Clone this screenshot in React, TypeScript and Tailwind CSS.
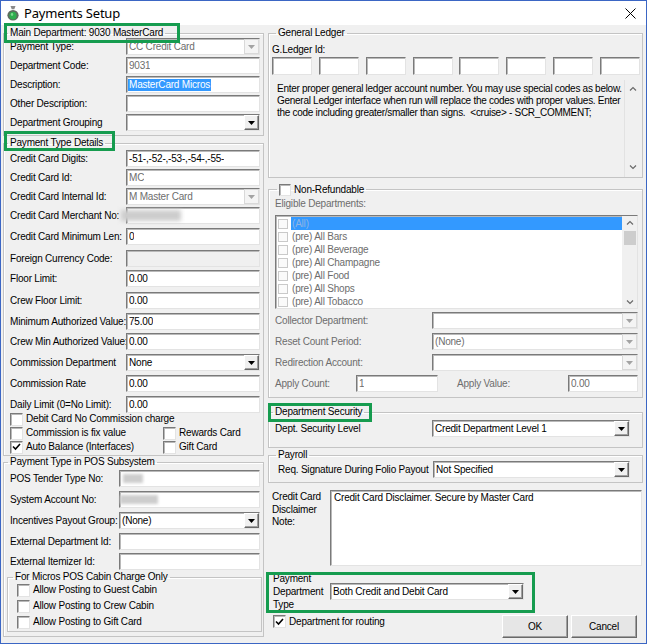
import type { ReactNode } from 'react';

const sunken =
  'border border-t-[#7a7a7a] border-l-[#7a7a7a] border-r-[#e3e3e3] border-b-[#e3e3e3] shadow-[inset_1px_1px_0_#b9b9b9]';
const raised =
  'border border-t-white border-l-white border-r-[#696969] border-b-[#696969] shadow-[inset_-1px_-1px_0_#a0a0a0]';

interface TextBoxProps {
  value?: string;
  gray?: boolean;
  disabled?: boolean;
  h?: string;
  className?: string;
  children?: ReactNode;
}

function TextBox({ value = '', gray = false, disabled = false, h = 'h-[17px]', className = '', children }: TextBoxProps) {
  return (
    <div
      className={`relative ${h} ${sunken} ${disabled ? 'bg-[#f0f0f0]' : 'bg-white'} flex items-center pl-[2px] ${
        gray ? 'text-[#6d6d6d]' : 'text-black'
      } ${className}`}
    >
      <span className="whitespace-nowrap overflow-hidden">{value}</span>
      {children}
    </div>
  );
}

function Combo({ value = '', disabled = false, className = '' }: { value?: string; disabled?: boolean; className?: string }) {
  return (
    <div className={`h-[17px] ${sunken} bg-white flex items-center ${className}`}>
      <span className={`flex-1 pl-[2px] whitespace-nowrap overflow-hidden ${disabled ? 'text-[#6d6d6d]' : ''}`}>{value}</span>
      <div
        className={`w-[15px] h-full flex items-center justify-center ${
          disabled ? 'border border-[#d9d9d9] bg-[#f4f4f4]' : `${raised} bg-[#f0f0f0]`
        }`}
      >
        <svg width="7" height="4" viewBox="0 0 7 4">
          <path d="M0 0h7L3.5 4z" fill={disabled ? '#a3a3a3' : '#000'} />
        </svg>
      </div>
    </div>
  );
}

function Check({ checked = false, faint = false, small = false }: { checked?: boolean; faint?: boolean; small?: boolean }) {
  if (faint) {
    return <div className="w-[10px] h-[10px] shrink-0 border border-[#c9c9c9] bg-[#fafafa]" />;
  }
  return (
    <div className={`${small ? 'w-[12px] h-[12px]' : 'w-[13px] h-[13px]'} shrink-0 ${sunken} bg-white flex items-center justify-center`}>
      {checked && (
        <svg width="9" height="8" viewBox="0 0 9 8">
          <path d="M1 3.5l2.5 2.5L8 1" stroke="#000" strokeWidth="1.6" fill="none" />
        </svg>
      )}
    </div>
  );
}

function CheckLabel({ label, checked = false }: { label: string; checked?: boolean }) {
  return (
    <div className="flex items-center gap-[3px] whitespace-nowrap">
      <Check checked={checked} />
      <span>{label}</span>
    </div>
  );
}

function Group({ title, className = '', legendClass = 'ml-[4px]', children }: { title: ReactNode; className?: string; legendClass?: string; children: ReactNode }) {
  return (
    <fieldset className={`border border-[#c4c4c4] shadow-[inset_1px_1px_0_white] ${className}`}>
      <legend className={`px-[2px] leading-[12px] ${legendClass}`}>{title}</legend>
      {children}
    </fieldset>
  );
}

function Row({ label, h, labelW, children }: { label: string; h: string; labelW: string; children: ReactNode }) {
  return (
    <div className={`flex items-start ${h}`}>
      <div className={`${labelW} h-[17px] flex items-center whitespace-nowrap shrink-0`}>{label}</div>
      <div className="flex-1 min-w-0">{children}</div>
    </div>
  );
}

function Chevron({ up }: { up?: boolean }) {
  return (
    <svg width="8" height="5" viewBox="0 0 8 5">
      <path d={up ? 'M1 4.5L4 1.5l3 3' : 'M1 0.5L4 3.5l3-3'} stroke="#6a6a6a" strokeWidth="1.2" fill="none" />
    </svg>
  );
}

const detailRows: { label: string; h: string; field: ReactNode }[] = [
  { label: 'Credit Card Digits:', h: 'h-[19px]', field: <TextBox value="-51-,-52-,-53-,-54-,-55-" /> },
  { label: 'Credit Card Id:', h: 'h-[19px]', field: <TextBox value="MC" gray /> },
  { label: 'Credit Card Internal Id:', h: 'h-[19px]', field: <Combo value="M Master Card" disabled /> },
  {
    label: 'Credit Card Merchant No:',
    h: 'h-[21px]',
    field: (
      <TextBox>
        <div className="absolute left-[-6px] top-[2px] w-[60px] h-[11px] bg-[#cdcdcd] blur-[2px]" />
      </TextBox>
    ),
  },
  { label: 'Credit Card Minimum Len:', h: 'h-[22px]', field: <TextBox value="0" /> },
  { label: 'Foreign Currency Code:', h: 'h-[20px]', field: <TextBox disabled /> },
  { label: 'Floor Limit:', h: 'h-[22px]', field: <TextBox value="0.00" /> },
  { label: 'Crew Floor Limit:', h: 'h-[21px]', field: <TextBox value="0.00" /> },
  { label: 'Minimum Authorized Value:', h: 'h-[20px]', field: <TextBox value="75.00" /> },
  { label: 'Crew Min Authorized Value:', h: 'h-[21px]', field: <TextBox value="0.00" /> },
  { label: 'Commission Department', h: 'h-[21px]', field: <Combo value="None" /> },
  { label: 'Commission Rate', h: 'h-[21px]', field: <TextBox value="0.00" /> },
  { label: 'Daily Limit (0=No Limit):', h: 'h-[16px]', field: <TextBox value="0.00" /> },
];

const departments = ['(All)', '(pre) All Bars', '(pre) All Beverage', '(pre) All Champagne', '(pre) All Food', '(pre) All Shops', '(pre) All Tobacco'];

export default function App() {
  return (
    <div className="relative w-[647px] h-[644px] overflow-hidden border border-[#3b66c4] bg-[#f0f0f0] text-black font-['Liberation_Sans',Arial,sans-serif] text-[10px] leading-[12px] tracking-[-0.2px]">
      {/* Title bar */}
      <div className="h-[24px] bg-white flex items-center pl-[5px] pr-[10px]">
        <svg width="14" height="16" viewBox="0 0 14 16">
          <path d="M4.5 1h5l-1.2 3.2h-2.6z" fill="#8a8a8a" />
          <ellipse cx="7" cy="10.3" rx="5.6" ry="5.2" fill="#5f6b5f" />
          <ellipse cx="7" cy="10.6" rx="3.6" ry="3.9" fill="#2fae4e" />
          <ellipse cx="6" cy="9.5" rx="1.2" ry="1.4" fill="#7fd98f" />
        </svg>
        <span className="ml-[4px] font-['Noto_Sans',sans-serif] text-[13px] tracking-[-0.2px] leading-[20px]">Payments Setup</span>
        <div className="flex-1" />
        <svg width="11" height="11" viewBox="0 0 11 11">
          <path d="M0.5 0.5l10 10M10.5 0.5l-10 10" stroke="#000" strokeWidth="1" />
        </svg>
      </div>

      <div className="flex pl-[2px] gap-[4px]">
        {/* Left column */}
        <div className="w-[261px] flex flex-col">
          <Group title="Main Department: 9030 MasterCard" className="mt-[2px]">
            <div className="-mt-px pl-[6px] pr-[3px] pb-[2px]">
              <Row label="Payment Type:" h="h-[19px]" labelW="w-[116px]">
                <Combo value="CC Credit Card" disabled />
              </Row>
              <Row label="Department Code:" h="h-[19px]" labelW="w-[116px]">
                <TextBox value="9031" gray />
              </Row>
              <Row label="Description:" h="h-[19px]" labelW="w-[116px]">
                <div className={`h-[17px] ${sunken} bg-white flex items-center pl-[1px]`}>
                  <span className="bg-[#3399ff] text-white px-[1px] whitespace-nowrap">MasterCard Micros</span>
                </div>
              </Row>
              <Row label="Other Description:" h="h-[19px]" labelW="w-[116px]">
                <TextBox />
              </Row>
              <Row label="Department Grouping" h="h-[19px]" labelW="w-[116px]">
                <Combo />
              </Row>
            </div>
          </Group>

          <Group title="Payment Type Details" className="mt-[1px]">
            <div className="mt-[1px] pl-[6px] pr-[3px] pb-[1px]">
              {detailRows.map((r) => (
                <Row key={r.label} label={r.label} h={r.h} labelW="w-[116px]">
                  {r.field}
                </Row>
              ))}
              <div className="h-[14px] flex items-center">
                <CheckLabel label="Debit Card No Commission charge" />
              </div>
              <div className="h-[14px] flex items-center">
                <div className="w-[153px]">
                  <CheckLabel label="Commission is fix value" />
                </div>
                <CheckLabel label="Rewards Card" />
              </div>
              <div className="h-[14px] flex items-center">
                <div className="w-[153px]">
                  <CheckLabel label="Auto Balance (Interfaces)" checked />
                </div>
                <CheckLabel label="Gift Card" />
              </div>
            </div>
          </Group>

          <Group title="Payment Type in POS Subsystem">
            <div className="mt-[2px] pl-[6px] pr-[3px]">
              <Row label="POS Tender Type No:" h="h-[21px]" labelW="w-[109px]">
                <TextBox>
                  <div className="absolute left-[3px] top-[3px] w-[20px] h-[9px] bg-[#cdcdcd] blur-[1.5px]" />
                </TextBox>
              </Row>
              <Row label="System Account No:" h="h-[21px]" labelW="w-[109px]">
                <TextBox>
                  <div className="absolute left-0 top-[3px] w-[38px] h-[9px] bg-[#cdcdcd] blur-[1.5px]" />
                </TextBox>
              </Row>
              <Row label="Incentives Payout Group:" h="h-[21px]" labelW="w-[109px]">
                <Combo value="(None)" />
              </Row>
              <Row label="External Department Id:" h="h-[20px]" labelW="w-[109px]">
                <TextBox />
              </Row>
              <Row label="External Itemizer Id:" h="h-[18px]" labelW="w-[109px]">
                <TextBox />
              </Row>
            </div>
            <div className="ml-[3px] mr-[1px] mb-[4px]">
              <Group title="For Micros POS Cabin Charge Only" legendClass="ml-[5px]">
                <div className="-mt-px pl-[9px] pb-[1px]">
                  <div className="h-[16px] flex items-center">
                    <CheckLabel label="Allow Posting to Guest Cabin" />
                  </div>
                  <div className="h-[16px] flex items-center">
                    <CheckLabel label="Allow Posting to Crew Cabin" />
                  </div>
                  <div className="h-[16px] flex items-center">
                    <CheckLabel label="Allow Posting to Gift Card" />
                  </div>
                </div>
              </Group>
            </div>
          </Group>
        </div>

        {/* Right column */}
        <div className="w-[375px] flex flex-col">
          <Group title="General Ledger" className="mt-[2px]" legendClass="ml-[7px]">
            <div className="pl-[3px] pt-[5px] pb-[1px]">G.Ledger Id:</div>
            <div className="flex justify-between pl-[3px] pr-[2px]">
              {[0, 1, 2, 3, 4, 5, 6, 7].map((i) => (
                <TextBox key={i} h="h-[18px]" className="w-[40px]" />
              ))}
            </div>
            <div className="mt-[5px] h-[97px] flex">
              <div className="flex-1 pl-[8px] pt-[3px] whitespace-nowrap tracking-[-0.28px]">
                Enter proper general ledger account number. You may use special codes as below.
                <br />
                General Ledger interface when run will replace the codes with proper values. Enter
                <br />
                the code including greater/smaller than signs.&nbsp; &lt;cruise&gt; - SCR_COMMENT;
              </div>
              <div className="w-[16px] mr-[2px] border-l border-[#e2e2e2] flex flex-col items-center justify-between pt-[6px] pb-[7px]">
                <Chevron up />
                <Chevron />
              </div>
            </div>
          </Group>

          <Group
            className="mt-[5px]"
            legendClass="ml-[8px]"
            title={
              <span className="flex items-center gap-[3px] h-[13px]">
                <Check small />
                <span>Non-Refundable</span>
              </span>
            }
          >
            <div className="mt-[2px] pl-[6px] text-[#6d6d6d]">Eligible Departments:</div>
            <div className={`mt-[5px] ml-[6px] mr-[4px] h-[94px] ${sunken} bg-white flex`}>
              <div className="flex-1 pt-[1px] text-[#6d6d6d]">
                {departments.map((d, i) => (
                  <div key={d} className="h-[13px] flex items-center pl-[2px] gap-[3px]">
                    <Check faint />
                    <span className={`flex-1 h-full flex items-center pl-[1px] ${i === 0 ? 'bg-[#3399ff] text-[#8fb3e3]' : ''}`}>{d}</span>
                  </div>
                ))}
              </div>
              <div className="w-[15px] bg-[#f0f0f0] flex flex-col items-center pt-[4px] pb-[3px]">
                <Chevron up />
                <div className="mt-[6px] w-[12px] h-[14px] bg-[#cdcdcd]" />
                <div className="flex-1" />
                <Chevron />
              </div>
            </div>
            <div className="mt-[1px] pl-[6px] pr-[4px] pb-[3px] text-[#6d6d6d]">
              <div className="h-[21px] flex items-center">
                <div className="w-[157px]">Collector Department:</div>
                <Combo disabled className="flex-1" />
              </div>
              <div className="h-[21px] flex items-center">
                <div className="w-[157px]">Reset Count Period:</div>
                <Combo value="(None)" disabled className="flex-1" />
              </div>
              <div className="h-[21px] flex items-center">
                <div className="w-[157px]">Redirection Account:</div>
                <Combo disabled className="flex-1" />
              </div>
              <div className="h-[21px] flex items-center">
                <div className="w-[81px]">Apply Count:</div>
                <TextBox value="1" gray className="w-[82px]" />
                <div className="ml-[19px] w-[111px]">Apply Value:</div>
                <TextBox value="0.00" gray className="flex-1" />
              </div>
            </div>
          </Group>

          <Group title="Department Security" className="mt-[8px]">
            <div className="mt-[1px] pl-[6px] pb-[8px] h-[28px] flex items-start">
              <div className="w-[157px] h-[19px] flex items-center">Dept. Security Level</div>
              <Combo value="Credit Department Level 1" className="w-[198px] mt-[1px]" />
            </div>
          </Group>

          <Group title="Payroll" className="mt-[1px]" legendClass="ml-[7px]">
            <div className="pl-[9px] pb-[4px] flex items-center">
              <div className="w-[155px] whitespace-nowrap">Req. Signature During Folio Payout</div>
              <Combo value="Not Specified" className="w-[197px]" />
            </div>
          </Group>

          <div className="mt-[7px] flex">
            <div className="w-[62px] shrink-0 pl-[4px] leading-[12.5px] pt-[1px] whitespace-nowrap">
              Credit Card
              <br />
              Disclaimer
              <br />
              Note:
            </div>
            <div className={`flex-1 mr-[1px] h-[76px] ${sunken} bg-white pl-[3px] pt-[1px]`}>Credit Card Disclaimer. Secure by Master Card</div>
          </div>

          <div className="mt-[6px] flex items-center">
            <div className="w-[62px] shrink-0 pl-[5px] leading-[13px] whitespace-nowrap">
              Payment
              <br />
              Department
              <br />
              Type
            </div>
            <Combo value="Both Credit and Debit Card" className="w-[194px]" />
          </div>

          <div className="mt-[4px] h-[23px] flex items-start">
            <div className="flex-1 pl-[5px]">
              <CheckLabel label="Department for routing" checked />
            </div>
            <div className="flex gap-[3px] mr-[6px]">
              <button className={`w-[66px] h-[23px] ${raised} bg-[#e6e6e6]`}>OK</button>
              <button className={`w-[66px] h-[23px] ${raised} bg-[#e6e6e6]`}>Cancel</button>
            </div>
          </div>
        </div>
      </div>

      {/* Highlight annotations */}
      <div className="absolute left-[3px] top-[22px] w-[176px] h-[20px] border-[3px] border-[#169c4f] pointer-events-none" />
      <div className="absolute left-[3px] top-[130px] w-[111px] h-[20px] border-[3px] border-[#169c4f] pointer-events-none" />
      <div className="absolute left-[267px] top-[402px] w-[104px] h-[19px] border-[3px] border-[#169c4f] pointer-events-none" />
      <div className="absolute left-[265px] top-[571px] w-[269px] h-[41px] border-[3px] border-[#169c4f] pointer-events-none" />
    </div>
  );
}
